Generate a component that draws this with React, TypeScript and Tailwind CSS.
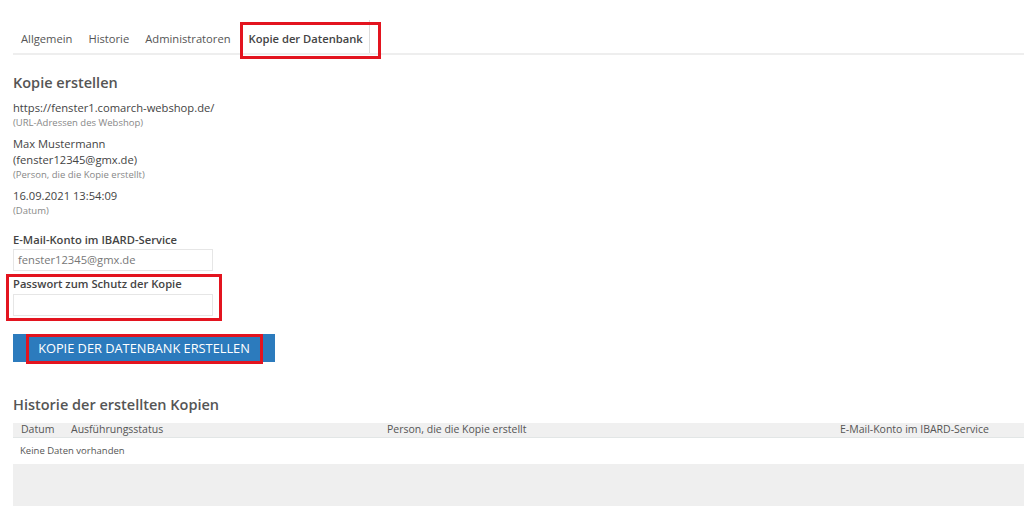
import React from "react";

const tabs = ["Allgemein", "Historie", "Administratoren"];

const Info = ({ lines, hint }: { lines: string[]; hint: string }) => (
  <div className="mb-[7px]">
    {lines.map((l) => (
      <div key={l} className="text-[11.2px] leading-[16px] text-[#444]">
        {l}
      </div>
    ))}
    <div className="text-[9.5px] leading-[13px] text-[#888]">{hint}</div>
  </div>
);

const App = () => {
  return (
    <div
      className="relative w-[1024px] h-[507px] overflow-hidden bg-white text-[#555]"
      style={{ fontFamily: '"Open Sans", sans-serif' }}
    >
      {/* tabs */}
      <div className="pt-[22px] pl-[13px]">
        <div className="flex items-end border-b-2 border-[#eeeeee] h-[33px]">
          {tabs.map((t) => (
            <div key={t} className="px-[8px] pb-[5px] text-[11.2px] text-[#555]">
              {t}
            </div>
          ))}
          <div className="ml-[4px] h-[33px] px-[6px] pt-[11px] border-r border-[#dddddd] text-[11.2px] font-semibold text-[#444] bg-white">
            Kopie der Datenbank
          </div>
        </div>
      </div>

      <div className="pl-[13px]">
        {/* Kopie erstellen */}
        <h2 className="mt-[18px] mb-[7px] text-[14.5px] font-semibold text-[#555] leading-[20px]">
          Kopie erstellen
        </h2>
        <Info lines={["https://fenster1.comarch-webshop.de/"]} hint="(URL-Adressen des Webshop)" />
        <Info lines={["Max Mustermann", "(fenster12345@gmx.de)"]} hint="(Person, die die Kopie erstellt)" />
        <Info lines={["16.09.2021 13:54:09"]} hint="(Datum)" />

        <div className="mt-[15px] text-[11.2px] font-semibold text-[#444] leading-[16px]">
          E-Mail-Konto im IBARD-Service
        </div>
        <div className="mt-[1px] w-[200px] h-[22px] border border-[#e6e6e6] px-[4px] text-[11.2px] leading-[20px] text-[#777]">
          fenster12345@gmx.de
        </div>

        <div className="mt-[5px] text-[11.2px] font-semibold text-[#444] leading-[16px]">
          Passwort zum Schutz der Kopie
        </div>
        <div className="mt-[2px] w-[200px] h-[22px] border border-[#e6e6e6]" />

        <button className="mt-[18px] block w-[262px] h-[28px] bg-[#2c7bbd] text-white text-[12.8px] uppercase leading-[28px] text-center">
          Kopie der Datenbank erstellen
        </button>

        {/* Historie */}
        <h2 className="mt-[33px] text-[14.5px] font-semibold text-[#555] leading-[20px]">
          Historie der erstellten Kopien
        </h2>
        <div className="mt-[8px]">
          <div className="flex h-[15px] items-center bg-[#f0f0f0] border-b border-[#e2e6e6] text-[10.5px] text-[#555]">
            <div className="w-[58px] pl-[8px]">Datum</div>
            <div className="w-[316px]">Ausführungsstatus</div>
            <div className="w-[453px]">Person, die die Kopie erstellt</div>
            <div>E-Mail-Konto im IBARD-Service</div>
          </div>
          <div className="h-[26px] pl-[7px] flex items-center text-[9.5px] text-[#555]">
            Keine Daten vorhanden
          </div>
          <div className="h-[42px] bg-[#efefef]" />
        </div>
      </div>

      {/* red annotation frames */}
      <div className="absolute left-[240px] top-[22px] w-[141px] h-[37px] border-[3px] border-[#e3141f]" />
      <div className="absolute left-[6px] top-[274px] w-[216px] h-[47px] border-[3px] border-[#e3141f]" />
      <div className="absolute left-[26px] top-[334px] w-[237px] h-[30px] border-[3px] border-[#e3141f]" />
    </div>
  );
};

export default App;
